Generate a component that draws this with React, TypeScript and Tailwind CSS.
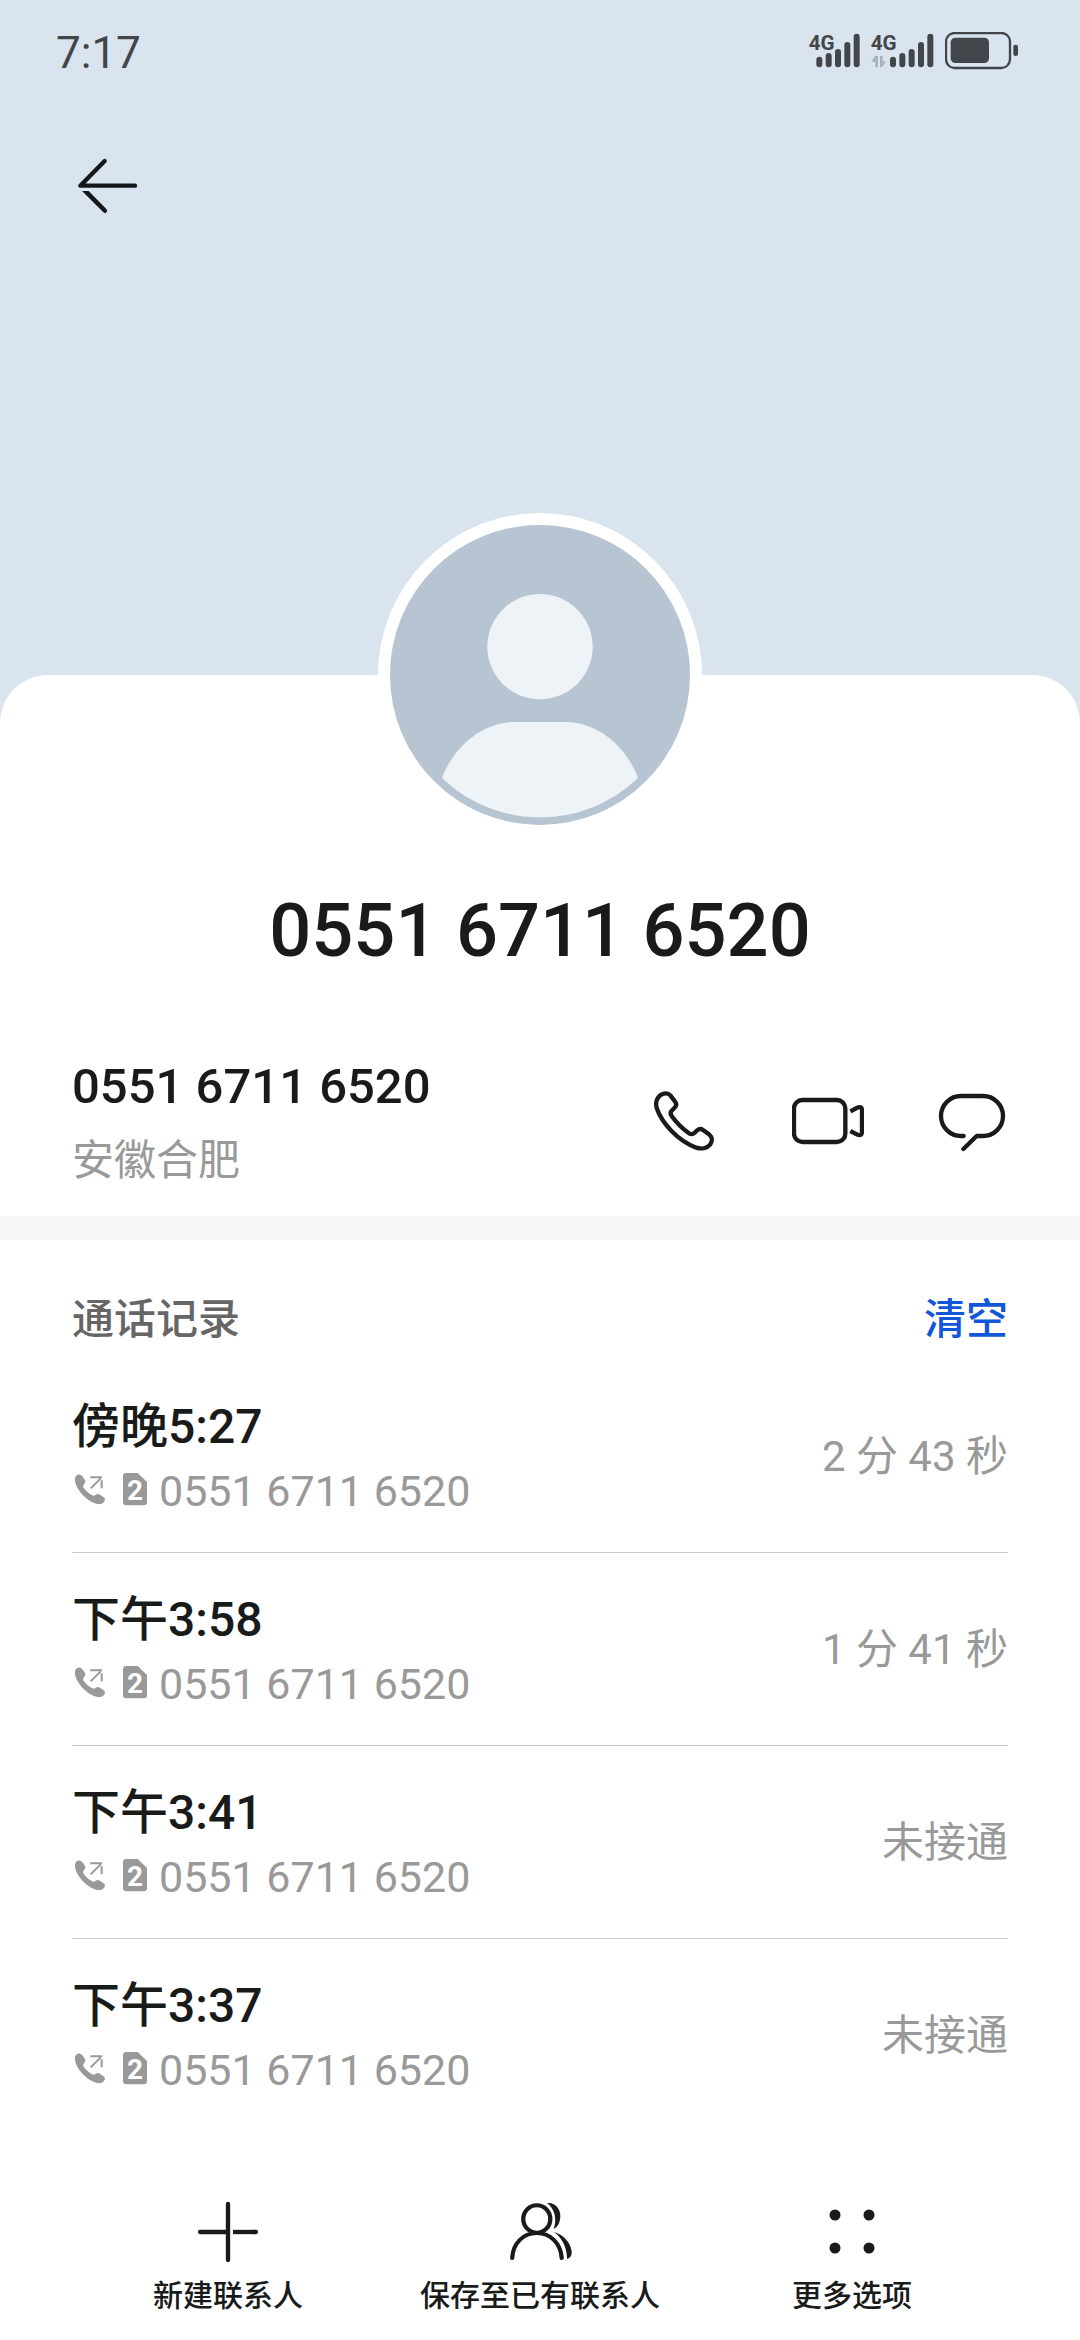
type Call = {
    id: number
    time: string
    result: string
}

const PHONE_NUMBER = "0551 6711 6520"

const calls: Call[] = [
    { id: 1, time: "傍晚5:27", result: "2 分 43 秒" },
    { id: 2, time: "下午3:58", result: "1 分 41 秒" },
    { id: 3, time: "下午3:41", result: "未接通" },
    { id: 4, time: "下午3:37", result: "未接通" },
]

//=============Status bar===============
function Signal({ data }: { data?: boolean }) {
    const start = data ? 339 : 118
    const bars = [149, 138, 126, 105, 80]
    return (
        <svg
            viewBox={data ? "273 66 186 114" : "87 66 150 114"}
            className={data ? "h-[38px] w-[62px] overflow-visible" : "h-[38px] w-[50px] overflow-visible"}
            aria-hidden="true"
        >
            <g stroke="#42464a" strokeWidth="18" strokeLinecap="round">
                {bars.map((top, i) => (
                    <path key={top} d={`M${start + i * 28} ${top}V163`} />
                ))}
            </g>
            <text x={data ? 272 : 86} y="119" fontSize="62" fontWeight="700" fill="#42464a">4G</text>
            {data && (
                <g fill="#a9b2bb">
                    <path d="M274 154 286 138H294V172H286V156Z" />
                    <path d="M300 138H308V154H318L306 172H300Z" />
                </g>
            )}
        </svg>
    )
}

function Battery() {
    return (
        <svg viewBox="495 66 219 114" className="h-[38px] w-[73px]" aria-hidden="true">
            <rect x="498" y="69" width="192" height="105" rx="26" fill="none" stroke="#42464a" strokeWidth="7" />
            <rect x="512" y="83" width="115" height="76" rx="14" fill="#42464a" />
            <rect x="700" y="104" width="14" height="34" rx="6" fill="#42464a" />
        </svg>
    )
}

//=============Icons===============
function Avatar() {
    return (
        <svg viewBox="90 75 900 900" className="h-[300px] w-[300px]" role="img" aria-label="头像">
            <circle cx="540" cy="525" r="450" fill="#b7c4d1" />
            <circle cx="540" cy="440" r="158" fill="#eef3f7" />
            <path d="M246 834C283 735 371 666 463 666H617C709 666 797 735 834 834C756 908 655 952 540 952S324 908 246 834Z" fill="#eef3f7" />
        </svg>
    )
}

function PhoneIcon() {
    return (
        <svg viewBox="54 72 216 216" className="h-[72px] w-[72px]" aria-hidden="true">
            <path
                d="M85 109C92 98 111 92 121 103L136 123C141 130 138 136 134 140L125 149C120 154 121 159 125 165C140 186 156 202 177 217C184 221 189 220 194 215L199 210C205 204 212 202 219 207L237 220C247 228 248 240 241 250C231 262 214 265 199 260C145 240 96 188 80 141C77 130 78 119 85 109Z"
                fill="none" stroke="#191a1a" strokeWidth="13" strokeLinejoin="round"
            />
        </svg>
    )
}

function VideoIcon() {
    return (
        <svg viewBox="486 72 216 216" className="h-[72px] w-[72px]" fill="none" stroke="#191a1a" strokeWidth="13" aria-hidden="true">
            <rect x="492" y="117" width="154" height="126" rx="25" />
            <path d="M661 151 680 141Q696 133 696 148V212Q696 227 680 220L661 210" />
        </svg>
    )
}

function MessageIcon() {
    return (
        <svg viewBox="918 72 216 216" className="h-[72px] w-[72px]" fill="none" stroke="#191a1a" strokeWidth="13" strokeLinecap="round" strokeLinejoin="round" aria-hidden="true">
            <path d="M1001 225H993A60 60 0 0 1 993 105H1059A60 60 0 0 1 1059 225H1040L1000 264" />
        </svg>
    )
}

function OutgoingIcon() {
    return (
        <svg viewBox="36 44 108 108" className="h-9 w-9" aria-hidden="true">
            <path d="M48 53C53 46 62 47 67 54L75 65C78 70 74 75 71 79C68 83 69 86 72 90C79 99 88 107 97 111C101 113 104 112 107 109C111 106 116 106 120 109L131 117C136 121 136 127 131 132C124 140 112 138 102 134C76 123 52 96 46 73C44 65 44 58 48 53Z" fill="#999" />
            <path d="M91 57H126M122 60 92 90M125 66V90" fill="none" stroke="#999" strokeWidth="6" />
        </svg>
    )
}

function SimTwoIcon() {
    return (
        <svg viewBox="189 44 72 108" className="h-9 w-6" aria-label="卡2" role="img">
            <path d="M199 44H233L261 71V131Q261 141 251 141H199Q189 141 189 131V54Q189 44 199 44Z" fill="#999" />
            <text x="225" y="125" textAnchor="middle" fontSize="84" fontWeight="700" fill="#fff">2</text>
        </svg>
    )
}

function PlusIcon() {
    return (
        <svg viewBox="186 48 216 216" className="h-[72px] w-[72px]" stroke="#191a1a" strokeWidth="13" aria-hidden="true">
            <path d="M294 72V240M210 156H288" strokeLinecap="round" />
            <path d="M309 156H370" />
            <path d="M368 156H378" strokeLinecap="round" />
        </svg>
    )
}

function PeopleIcon() {
    return (
        <svg viewBox="291 48 202 216" preserveAspectRatio="none" className="h-[72px] w-[72px]" aria-hidden="true">
            <g fill="none" stroke="#191a1a" strokeWidth="12" strokeLinecap="round">
                <ellipse cx="383" cy="117" rx="38" ry="41" />
                <path d="M314 234C316 190 345 159 383 159S450 190 453 234" />
            </g>
            <g fill="#191a1a">
                <path d="M412 69C435 66 450 87 449 110C448 129 441 142 430 147C440 121 435 88 412 69Z" />
                <path d="M430 155C460 164 480 191 481 217C481 228 477 234 468 237C468 203 454 172 430 155Z" />
            </g>
        </svg>
    )
}

function MoreIcon() {
    return (
        <svg viewBox="0 0 72 72" className="h-[72px] w-[72px]" fill="#191a1a" aria-hidden="true">
            <circle cx="19" cy="19" r="5.5" />
            <circle cx="53" cy="19" r="5.5" />
            <circle cx="19" cy="52" r="5.5" />
            <circle cx="53" cy="52" r="5.5" />
        </svg>
    )
}

const actions = [
    { label: "新建联系人", icon: <PlusIcon /> },
    { label: "保存至已有联系人", icon: <PeopleIcon /> },
    { label: "更多选项", icon: <MoreIcon /> },
]

export default function App() {
    return (
        <div className="flex min-h-screen w-full flex-col bg-[#dae4ee] font-['Roboto','Noto_Sans_CJK_SC',sans-serif] text-[#191a1a]">
            <header className="flex h-[675px] flex-col">
                <div className="flex items-start justify-between pt-8 pr-[62px] pl-14 text-[#42464a]">
                    <span className="text-[44px] leading-[42px]">7:17</span>
                    <div className="flex gap-3">
                        <Signal />
                        <Signal data />
                        <Battery />
                    </div>
                </div>
                <button type="button" aria-label="返回" className="mt-[76px] ml-[72px] w-[72px] cursor-pointer">
                    <svg viewBox="96 390 216 216" className="h-[72px] w-[72px]" fill="none" stroke="#15181a" strokeWidth="13" aria-hidden="true">
                        <path d="M194 423 121 497H285" strokeLinecap="round" strokeLinejoin="round" />
                        <path d="M126 513H146L199 567A6 6 0 0 1 190 577Z" fill="#15181a" stroke="none" />
                    </svg>
                </button>
            </header>

            <main className="flex flex-1 flex-col rounded-t-[48px] bg-white">
                <section className="flex flex-col items-center px-[72px] pb-[27px]">
                    <div className="-mt-[162px] rounded-full border-12 border-white">
                        <Avatar />
                    </div>
                    <h1 className="mt-[50px] text-[74px] leading-[88px] font-medium">{PHONE_NUMBER}</h1>
                    <div className="flex w-full items-center justify-between pt-[78px]">
                        <div className="flex flex-col">
                            <span className="text-[49px] leading-[68px] font-medium">{PHONE_NUMBER}</span>
                            <span className="mt-3 text-[42px] leading-[56px] text-[#999]">安徽合肥</span>
                        </div>
                        <div className="flex gap-[72px]">
                            <button type="button" aria-label="拨打电话" className="cursor-pointer"><PhoneIcon /></button>
                            <button type="button" aria-label="视频通话" className="cursor-pointer"><VideoIcon /></button>
                            <button type="button" aria-label="发送信息" className="cursor-pointer"><MessageIcon /></button>
                        </div>
                    </div>
                </section>

                <div className="h-6 bg-[#f7f7f7]"></div>

                <section className="px-[72px]">
                    <div className="flex items-center justify-between pt-[52px] pb-3 text-[42px] leading-[56px] font-medium">
                        <h2 className="text-[#666]">通话记录</h2>
                        <button type="button" className="cursor-pointer text-[#1257d9]">清空</button>
                    </div>
                    <ul>
                        {calls.map((call) => (
                            <li key={call.id} className="flex items-center justify-between border-b border-[#ccc] pt-[35px] pb-[37px] last:border-transparent">
                                <div className="flex flex-col gap-2">
                                    <span className="text-[48px] leading-[64px] font-medium">{call.time}</span>
                                    <div className="flex items-center text-[#999]">
                                        <OutgoingIcon />
                                        <span className="mr-3 ml-[15px]"><SimTwoIcon /></span>
                                        <span className="text-[43px] leading-[48px]">{PHONE_NUMBER}</span>
                                    </div>
                                </div>
                                <span className="pt-1 text-[42px] leading-[52px] text-[#999]">{call.result}</span>
                            </li>
                        ))}
                    </ul>
                </section>

                <nav className="mt-auto grid grid-cols-3 px-[72px] pb-6">
                    {actions.map((action) => (
                        <button key={action.label} type="button" className="flex cursor-pointer flex-col items-center gap-2">
                            {action.icon}
                            <span className="text-[30px] leading-[40px] font-medium whitespace-nowrap">{action.label}</span>
                        </button>
                    ))}
                </nav>
            </main>
        </div>
    )
}
